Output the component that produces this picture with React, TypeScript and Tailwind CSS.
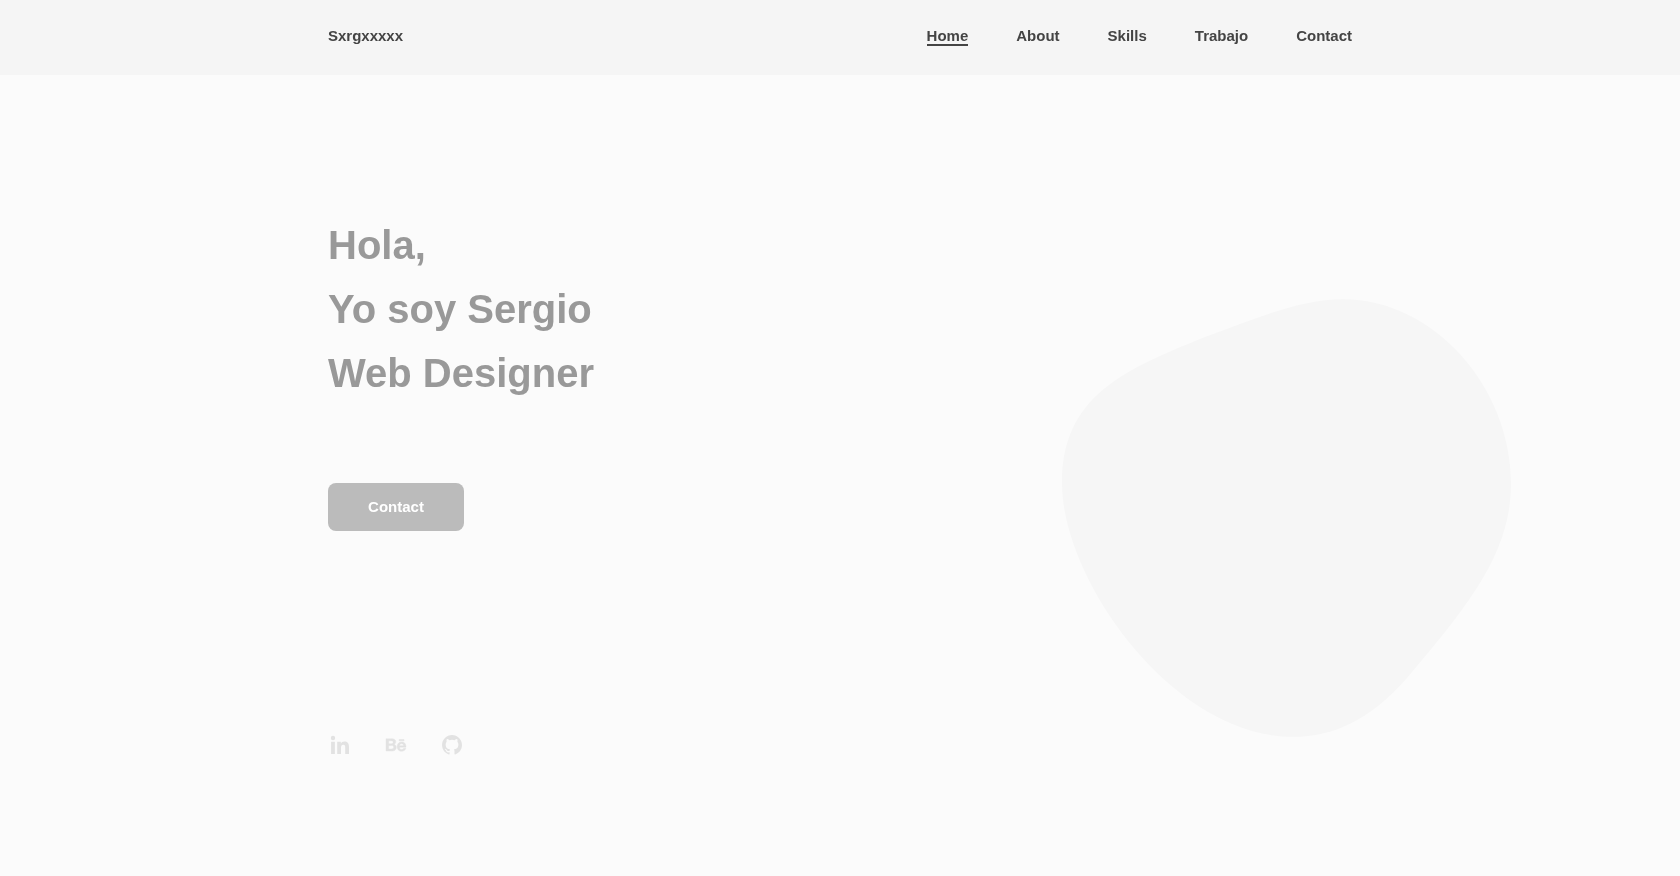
import { BiLogoBehance, BiLogoGithub, BiLogoLinkedin } from 'react-icons/bi';

const navLinks = ['Home', 'About', 'Skills', 'Trabajo', 'Contact'];

/** Soft background shape behind the hero */
function Blob() {
  return (
    <svg
      viewBox="67 58 1346 1312"
      className="mt-[224px] -mr-[159px] h-[438px] w-[449px] shrink-0"
      aria-hidden="true"
    >
      <path
        d="M910 58C1180 58 1413 320 1413 610C1413 810 1300 960 1100 1195C990 1320 880 1370 760 1370C400 1370 67 900 67 610C67 350 250 270 500 170C650 115 780 58 910 58Z"
        fill="#f6f6f6"
      />
    </svg>
  );
}

export default function App() {
  return (
    <div className="h-[876px] overflow-hidden bg-[#fbfbfb] font-['Liberation_Sans',Arial,sans-serif] text-[15px] font-bold text-[#444444]">
      <header className="h-[75px] bg-[#f5f5f5]">
        <div className="mx-auto flex w-[1024px] justify-between pt-6 will-change-transform">
          <a className="leading-6">Sxrgxxxxx</a>
          <nav className="flex gap-12">
            {navLinks.map((link, index) => (
              <a key={link} className="relative leading-6">
                {link}
                {index === 0 && <span className="absolute right-0 bottom-[2px] left-0 h-[2px] bg-[#444444]" />}
              </a>
            ))}
          </nav>
        </div>
      </header>

      <main className="mx-auto flex w-[1024px] justify-between">
        <div className="pt-[138px]">
          <h1 className="text-[40px] leading-[64px] text-[#999999] will-change-transform">
            Hola,
            <br />
            Yo soy Sergio
            <br />
            Web Designer
          </h1>
          <button className="mt-[78px] block h-12 w-[136px] rounded-lg bg-[#bbbbbb] text-white will-change-transform">
            Contact
          </button>
          <div className="mt-[202px] flex gap-8 text-[24px] text-[#e2e2e2]">
            <BiLogoLinkedin />
            <BiLogoBehance strokeWidth={0.4} />
            <BiLogoGithub />
          </div>
        </div>
        <Blob />
      </main>
    </div>
  );
}
